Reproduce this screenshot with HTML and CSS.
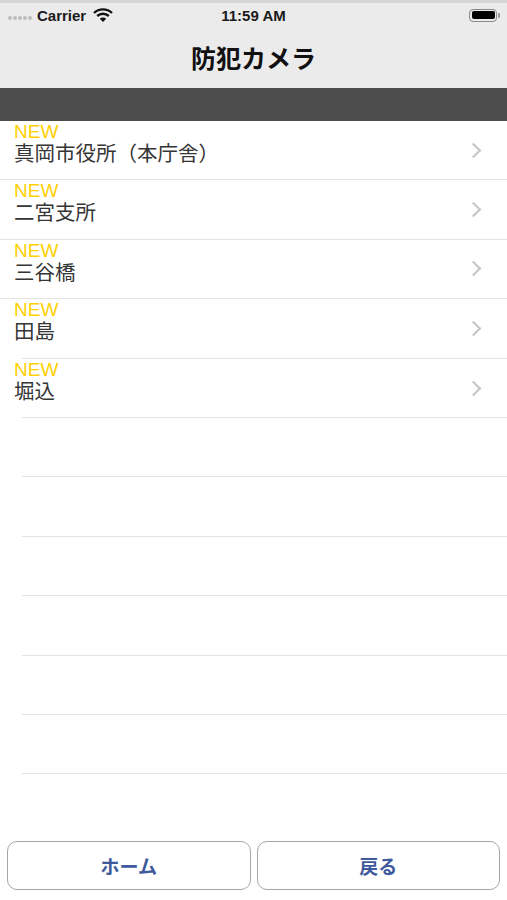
FILE: index.html
```html
<!DOCTYPE html>
<html lang="ja">
<head>
  <meta charset="UTF-8">
  <title>防犯カメラ</title>
  <link rel="stylesheet" href="styles.css">
</head>
<body>
  <!-- Status bar + navigation title -->
  <div id="top">
    <div class="status">
      <div class="status-left">
        <span class="signal"><i></i><i></i><i></i><i></i><i></i></span>
        <span>Carrier</span>
        <svg class="wifi" width="20" height="14" viewBox="0 0 20 14">
          <path d="M1 5 A13 13 0 0 1 19 5" fill="none" stroke="#111" stroke-width="2.4"/>
          <path d="M4.2 8 A8.5 8.5 0 0 1 15.8 8" fill="none" stroke="#111" stroke-width="2.4"/>
          <path d="M10 14 L6.8 10.8 A4.6 4.6 0 0 1 13.2 10.8 Z" fill="#111"/>
        </svg>
      </div>
      <div class="status-time">11:59 AM</div>
      <div class="status-right">
        <div class="battery"><div class="battery-fill"></div></div>
        <div class="battery-tip"></div>
      </div>
    </div>
    <h1>防犯カメラ</h1>
  </div>

  <div id="band"></div>

  <div id="list">
    <div class="row">
      <div class="cell-text"><span class="new">NEW</span><span class="name">真岡市役所（本庁舎）</span></div>
      <span class="chev"></span>
    </div>
    <div class="row">
      <div class="cell-text"><span class="new">NEW</span><span class="name">二宮支所</span></div>
      <span class="chev"></span>
    </div>
    <div class="row">
      <div class="cell-text"><span class="new">NEW</span><span class="name">三谷橋</span></div>
      <span class="chev"></span>
    </div>
    <div class="row inset">
      <div class="cell-text"><span class="new">NEW</span><span class="name">田島</span></div>
      <span class="chev"></span>
    </div>
    <div class="row inset">
      <div class="cell-text"><span class="new">NEW</span><span class="name">堀込</span></div>
      <span class="chev"></span>
    </div>
    <div class="row inset empty"></div>
    <div class="row inset empty"></div>
    <div class="row inset empty"></div>
    <div class="row inset empty"></div>
    <div class="row inset empty"></div>
    <div class="row inset empty"></div>
  </div>

  <!-- Bottom buttons -->
  <div id="footer">
    <button class="foot-btn">ホーム</button>
    <button class="foot-btn">戻る</button>
  </div>
</body>
</html>
```

FILE: styles.css
```css
body {
  margin: 0;
  width: 507px;
  height: 900px;
  background: #fff;
  font-family: "Liberation Sans", "Noto Sans CJK JP", sans-serif;
  position: relative;
  overflow: hidden;
}
#top {
  background: #ebebeb;
  border-top: 3px solid #d6d6d6;
  height: 88px;
  box-sizing: border-box;
}
.status {
  height: 24px;
  display: flex;
  align-items: center;
  justify-content: space-between;
  padding: 0 7px 0 8px;
  font-size: 15px;
  font-weight: bold;
  color: #1a1a1a;
  position: relative;
}
.status-left {
  display: flex;
  align-items: center;
  gap: 5px;
}
.signal {
  display: flex;
  gap: 1px;
  margin-top: 5px;
}
.signal i {
  width: 4px;
  height: 4px;
  border-radius: 50%;
  background: #bdbdbd;
}
.wifi {
  margin-left: 2px;
}
.status-time {
  position: absolute;
  left: 0;
  right: 0;
  text-align: center;
  pointer-events: none;
}
.status-right {
  display: flex;
  align-items: center;
}
.battery {
  width: 28px;
  height: 13px;
  border: 1.5px solid #8a8a8a;
  border-radius: 4px;
  padding: 1.5px;
  box-sizing: border-box;
  display: flex;
}
.battery-fill {
  flex: 1;
  background: #000;
  border-radius: 2px;
}
.battery-tip {
  width: 2px;
  height: 5px;
  background: #9a9a9a;
  border-radius: 0 1px 1px 0;
  margin-left: 1px;
}
h1 {
  margin: 0;
  text-align: center;
  font-size: 25px;
  font-weight: bold;
  color: #111;
  line-height: 32px;
  padding-top: 14px;
  font-family: "Noto Sans CJK JP", sans-serif;
}
#band {
  height: 33px;
  background: #4d4d4d;
}
.row {
  height: 59.4px;
  box-sizing: border-box;
  border-bottom: 1px solid #e4e4e4;
  display: flex;
  align-items: flex-start;
  justify-content: space-between;
  padding-left: 14px;
  padding-right: 26px;
  position: relative;
}
.row.inset {
  border-bottom: none;
}
.row.inset::after {
  content: "";
  position: absolute;
  left: 22px;
  right: 0;
  bottom: 0;
  height: 1px;
  background: #e4e4e4;
}
.cell-text {
  display: flex;
  flex-direction: column;
}
.new {
  color: #ffd000;
  font-size: 19px;
  line-height: 18px;
  margin-top: 2px;
}
.name {
  color: #353535;
  font-size: 20.5px;
  line-height: 24px;
  font-family: "Noto Sans CJK JP", sans-serif;
  margin-top: -1px;
}
.chev {
  width: 9px;
  height: 9px;
  border-top: 2.5px solid #c5c5c8;
  border-right: 2.5px solid #c5c5c8;
  transform: rotate(45deg);
  align-self: center;
  margin-right: 2px;
}
#footer {
  position: absolute;
  left: 7px;
  right: 7px;
  top: 841px;
  display: flex;
  gap: 6px;
}
.foot-btn {
  flex: 1;
  height: 49px;
  background: #fff;
  border: 1.5px solid #a6a6a6;
  border-radius: 10px;
  color: #3e5a9c;
  font-size: 19px;
  font-weight: bold;
  font-family: "Noto Sans CJK JP", sans-serif;
}
```
